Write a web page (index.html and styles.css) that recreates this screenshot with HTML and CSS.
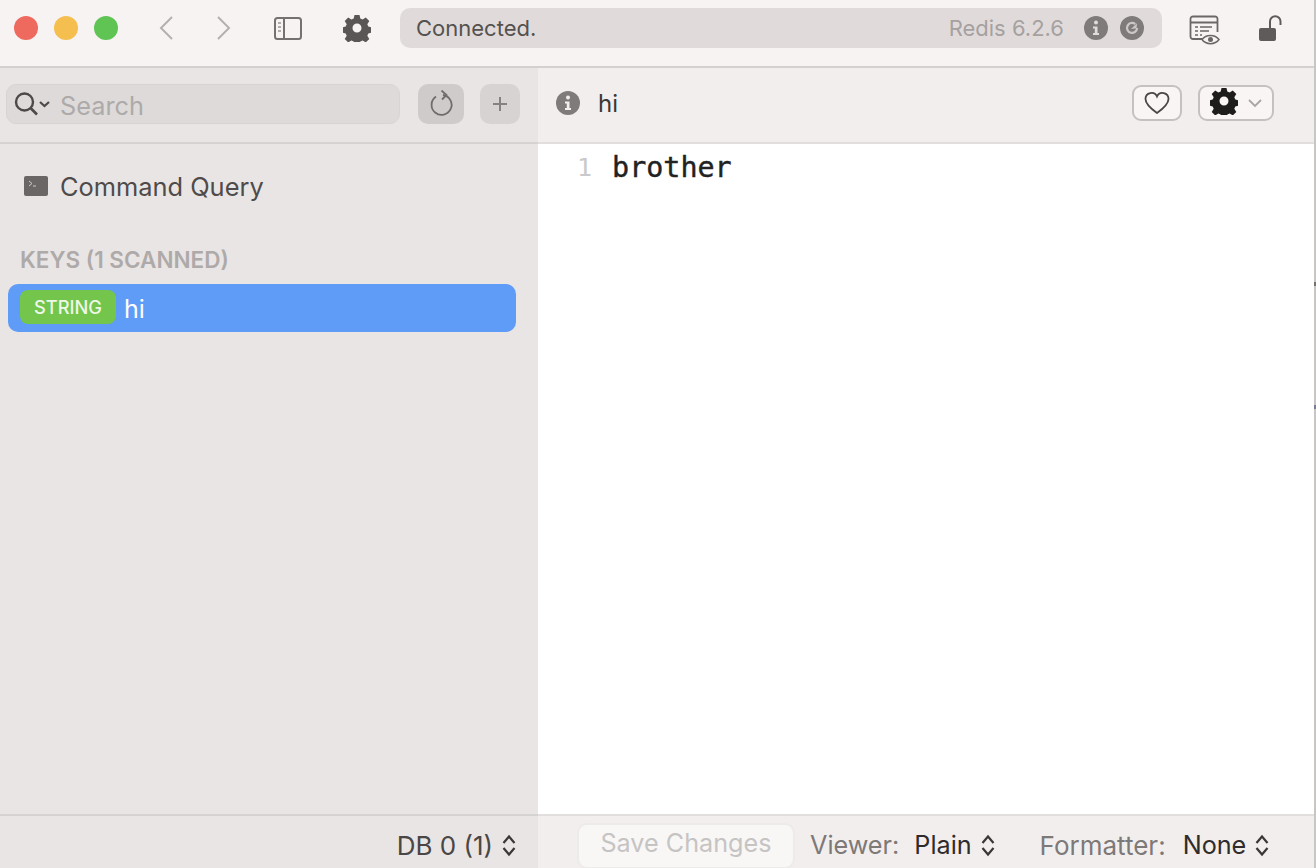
FILE: index.html
```html
<!DOCTYPE html>
<html lang="en">
<head>
<meta charset="utf-8">
<title>Redis</title>
<link rel="stylesheet" href="styles.css">
</head>
<body>
<div class="app">
  <header class="titlebar">
    <div class="lights">
      <span class="light red"></span><span class="light yellow"></span><span class="light green"></span>
    </div>
    <div class="nav">
      <svg class="ic" width="18" height="26" viewBox="0 0 18 26"><path d="M15 2 4 13l11 11" fill="none" stroke="#b4b0af" stroke-width="2"/></svg>
      <svg class="ic" width="18" height="26" viewBox="0 0 18 26"><path d="M3 2l11 11L3 24" fill="none" stroke="#b4b0af" stroke-width="2"/></svg>
    </div>
    <svg class="ic sidebar-ic" width="30" height="26" viewBox="0 0 30 26"><rect x="2" y="3" width="26" height="21" rx="2.500" fill="none" stroke="#757170" stroke-width="2"/><path d="M11 3v21" stroke="#757170" stroke-width="2"/><path d="M5 8h3M5 12h3M5 16h3" stroke="#999594" stroke-width="1.500"/></svg>
    <svg class="ic gear-top" width="28" height="28" viewBox="0 0 28 28"><use href="#gear" fill="#5a5655"/></svg>
    <div class="status">
      <span class="status-text">Connected.</span>
      <span class="status-version">Redis 6.2.6</span>
      <svg class="ic" width="24" height="24" viewBox="0 0 24 24"><circle cx="12" cy="12" r="12" fill="#7f7b7a"/><circle cx="12" cy="6.500" r="2" fill="#e0dbda"/><path d="M9 10.500h4.500V17H15v2H9v-2h1.800v-4.500H9z" fill="#e0dbda"/></svg>
      <svg class="ic" width="24" height="24" viewBox="0 0 24 24"><circle cx="12" cy="12" r="12" fill="#7f7b7a"/><path d="M17 12a5 5 0 1 1-1.800-3.900" fill="none" stroke="#cdc8c7" stroke-width="2.200"/><path d="M11 13l5.500-.8.500-5z" fill="#cdc8c7"/></svg>
    </div>
    <svg class="ic console-ic" width="32" height="30" viewBox="0 0 32 30"><path d="M14 24H4a2.500 2.500 0 0 1-2.500-2.500V4A2.500 2.500 0 0 1 4 1.500h22A2.500 2.500 0 0 1 28.500 4v13" fill="none" stroke="#6b6766" stroke-width="1.800"/><path d="M2 7.500h26" stroke="#6b6766" stroke-width="2"/><path d="M6 12h3M11 12h12M6 16h3M11 16h9M6 20h3M11 20h2" stroke="#6b6766" stroke-width="1.500"/><path d="M13 24.500c4-5.500 13-5.500 17 0-4 5.500-13 5.500-17 0z" fill="#f8f3f3" stroke="#6b6766" stroke-width="1.500"/><circle cx="21.500" cy="24.500" r="2.500" fill="#6b6766"/></svg>
    <svg class="ic lock-ic" width="26" height="28" viewBox="0 0 26 28"><rect x="1" y="13" width="17" height="13" rx="2" fill="#5f5b5a"/><path d="M12 13V6.500a5.200 5.200 0 0 1 10.500 0V10" fill="none" stroke="#5f5b5a" stroke-width="2"/></svg>
  </header>

  <div class="panes">
    <aside class="sidebar">
      <div class="side-tools">
        <div class="search">
          <svg class="ic" width="38" height="26" viewBox="0 0 38 26"><circle cx="10.500" cy="11" r="8.500" fill="none" stroke="#4d4948" stroke-width="2.400"/><path d="M16.500 17l6.500 6.500" stroke="#4d4948" stroke-width="2.600"/><path d="M26 11l4.500 4 4.500-4" fill="none" stroke="#4d4948" stroke-width="2.200"/></svg>
          <span class="search-text">Search</span>
        </div>
        <button class="tool-btn refresh" type="button"><svg class="ic" width="26" height="28" viewBox="-2 0 26 28"><path d="M6 6.600A10 10 0 1 0 13 5" fill="none" stroke="#706c6b" stroke-width="1.800"/><path d="M11.500 .5 16.500 5 12 9.500" fill="none" stroke="#706c6b" stroke-width="1.800"/></svg></button>
        <button class="tool-btn add" type="button"><svg class="ic" width="16" height="16" viewBox="0 0 16 16"><path d="M8 1v14M1 8h14" stroke="#858180" stroke-width="2"/></svg></button>
      </div>
      <div class="side-body">
        <div class="command">
          <svg class="ic" width="24" height="20" viewBox="0 0 24 20"><rect width="24" height="20" rx="2" fill="#6a6665"/><path d="M5 5l3 2.500-3 2.500M9 10h3" fill="none" stroke="#cfcac9" stroke-width="1"/></svg>
          <span>Command Query</span>
        </div>
        <div class="keys-head">KEYS (1 SCANNED)</div>
        <div class="key-row">
          <span class="badge">STRING</span>
          <span class="key-name">hi</span>
        </div>
      </div>
      <div class="side-foot">
        <span>DB 0 (1)</span>
        <svg class="ic" width="16" height="24" viewBox="0 0 16 24"><use href="#updown"/></svg>
      </div>
    </aside>

    <main class="content">
      <div class="key-bar">
        <svg class="ic" width="24" height="24" viewBox="0 0 24 24"><circle cx="12" cy="12" r="12" fill="#7f7b7a"/><circle cx="12" cy="6.500" r="2" fill="#f2eeed"/><path d="M9 10.500h4.500V17H15v2H9v-2h1.800v-4.500H9z" fill="#f2eeed"/></svg>
        <span class="key-title">hi</span>
        <button class="outline-btn heart" type="button"><svg class="ic" width="28" height="24" viewBox="0 0 28 24"><path d="M14 22C7 17 2.500 13 2.500 8A6 6 0 0 1 14 5.500 6 6 0 0 1 25.500 8C25.500 13 21 17 14 22z" fill="none" stroke="#4a4645" stroke-width="1.800"/></svg></button>
        <button class="outline-btn gear-menu" type="button">
          <svg class="ic gear-dark" width="28" height="28" viewBox="0 0 28 28"><use href="#gear" fill="#1f1c1c"/></svg>
          <svg class="ic" width="14" height="10" viewBox="0 0 14 10"><path d="M1 2l6 6 6-6" fill="none" stroke="#a9a5a4" stroke-width="1.800"/></svg>
        </button>
      </div>
      <div class="editor">
        <span class="gutter">1</span>
        <span class="code">brother</span>
      </div>
      <div class="content-foot">
        <button class="save" type="button">Save Changes</button>
        <span class="label viewer-label">Viewer:</span>
        <span class="value">Plain</span>
        <svg class="ic" width="16" height="24" viewBox="0 0 16 24"><use href="#updown"/></svg>
        <span class="label formatter-label">Formatter:</span>
        <span class="value formatter-value">None</span>
        <svg class="ic" width="16" height="24" viewBox="0 0 16 24"><use href="#updown"/></svg>
      </div>
    </main>
  </div>
  <span class="edge-mark mark-a"></span>
  <span class="edge-mark mark-b"></span>
</div>

<svg class="defs" width="0" height="0">
  <defs>
    <path id="gear" fill-rule="evenodd" d="M11.500 1h5l.8 3.600 2.300 1 3.200-2 3.500 3.500-2 3.200 1 2.300 3.700.8v5.200l-3.700.8-1 2.300 2 3.200-3.500 3.500-3.200-2-2.300 1-.8 3.600h-5l-.8-3.600-2.300-1-3.200 2-3.500-3.500 2-3.200-1-2.300-3.700-.8v-5.200l3.700-.8 1-2.300-2-3.200 3.500-3.500 3.200 2 2.300-1zM14 9.500a4.500 4.500 0 1 0 0 9 4.500 4.500 0 0 0 0-9z"/>
    <g id="updown" fill="none" stroke="#3a3736" stroke-width="2.200"><path d="M2.500 10 8 3.500 13.500 10"/><path d="M2.500 15 8 21.500 13.500 15"/></g>
  </defs>
</svg>
</body>
</html>
```
FILE: styles.css
```css
* { box-sizing: border-box; }
html, body { height: 100%; margin: 0; }
body { font-family: Inter, "Liberation Sans", sans-serif; overflow: hidden; color: #3f3b3a; }
.defs { display: block; height: 0; }
.ic { display: block; flex: none; }
button { font: inherit; padding: 0; }

.app { position: relative; height: 868px; display: flex; flex-direction: column; background: #f2eeed; border-right: 2px solid #c8c6c5; }
.edge-mark { position: absolute; right: -2px; width: 2px; height: 4px; }
.mark-a { top: 282px; background: #77726f; }
.mark-b { top: 405px; background: #7c7a9a; }

.titlebar { height: 68px; flex: none; display: flex; align-items: center; background: #f8f3f3; border-bottom: 2px solid #d4d0cf; padding: 0 0 10px 14px; }
.lights { display: flex; gap: 16px; }
.light { width: 24px; height: 24px; border-radius: 50%; }
.red { background: #ee6a5f; }
.yellow { background: #f5bf4f; }
.green { background: #5fc454; }
.nav { display: flex; gap: 40px; margin-left: 39px; }
.sidebar-ic { margin-left: 40px; }
.gear-top { margin-left: 40px; }
.status { width: 762px; height: 40px; margin-left: 29px; background: #e0dbda; border-radius: 10px; display: flex; align-items: center; gap: 12px; padding: 0 18px 0 16px; font-size: 22px; }
.status-text { color: #55514f; flex: 1; }
.status-version { color: #a5a1a0; margin-right: 8px; }
.console-ic { margin-left: 27px; margin-top: 4px; }
.lock-ic { margin-left: 37px; margin-top: 1px; }

.panes { flex: 1; display: flex; min-height: 0; }
.sidebar { width: 538px; flex: none; display: flex; flex-direction: column; background: #e9e5e4; }
.side-tools { height: 76px; flex: none; display: flex; align-items: center; border-bottom: 2px solid #d6d2d1; padding: 0 18px 2px 6px; }
.search { flex: 1; height: 40px; background: #dedada; border: 1px solid #d8d4d3; border-radius: 10px; display: flex; align-items: center; gap: 8px; padding-left: 7px; }
.search-text { color: #adaaa9; font-size: 25.300px; padding-top: 2px; }
.tool-btn { height: 40px; border: 0; background: #cfcbca; border-radius: 10px; display: flex; align-items: center; justify-content: center; }
.refresh { width: 46px; margin-left: 18px; }
.add { width: 40px; margin-left: 16px; background: #d7d3d2; }

.side-body { flex: 1; padding: 0 22px 0 8px; }
.command { display: flex; align-items: center; gap: 12px; margin: 27px 0 0 16px; font-size: 25.400px; color: #4f4b4a; height: 30px; }
.keys-head { margin: 47px 0 0 12px; font-size: 22.500px; font-weight: 600; color: #aeaaa9; height: 24px; line-height: 24px; }
.key-row { height: 48px; margin-top: 12px; background: #5e9cf7; border-radius: 10px; display: flex; align-items: center; gap: 8px; padding-left: 12px; }
.badge { width: 96px; height: 34px; margin-top: -2px; background: #74c54c; border-radius: 8px; color: #eef8e8; font-size: 18.300px; font-weight: 500; display: flex; align-items: center; justify-content: center; }
.key-name { color: #fff; font-size: 25px; padding-top: 2px; }

.side-foot { height: 54px; flex: none; border-top: 2px solid #d6d2d1; display: flex; align-items: center; justify-content: flex-end; gap: 8px; padding: 6px 21px 0 0; font-size: 26px; color: #4a4645; }

.content { flex: 1; min-width: 0; display: flex; flex-direction: column; }
.key-bar { height: 76px; flex: none; display: flex; align-items: center; border-bottom: 2px solid #e2dedd; padding: 0 40px 4px 18px; }
.key-title { flex: 1; margin-left: 18px; font-size: 24px; color: #3a3736; }
.outline-btn { height: 36px; border: 2px solid #c5c1c0; border-radius: 9px; background: #f8f5f4; display: flex; align-items: center; justify-content: center; }
.heart { width: 50px; }
.gear-menu { width: 76px; margin-left: 16px; gap: 10px; }
.gear-dark { margin-top: -4px; }

.editor { flex: 1; background: #fff; display: flex; align-items: flex-start; padding: 6px 0 0 39px; font-family: "DejaVu Sans Mono", "Liberation Mono", monospace; font-size: 28.400px; line-height: 36px; }
.gutter { color: #c9c9c9; font-size: 25px; font-weight: 400; }
.code { margin-left: 20px; color: #222; font-weight: 400; -webkit-text-stroke: .4px #222; }

.content-foot { height: 54px; flex: none; border-top: 2px solid #e2dedd; display: flex; align-items: center; padding: 6px 0 0 39px; font-size: 25.200px; }
.save { width: 218px; height: 46px; margin-top: 2px; border: 2px solid #ecebea; border-radius: 10px; background: #f8f7f6; color: #c6c4c3; font-size: 25.200px; padding-bottom: 6px; }
.label { color: #7d7978; }
.viewer-label { margin-left: 15px; }
.value { color: #2f2c2b; margin: 0 8px 0 15px; }
.formatter-label { margin-left: 44px; font-size: 26px; }
.formatter-value { margin-left: 17px; }
```
